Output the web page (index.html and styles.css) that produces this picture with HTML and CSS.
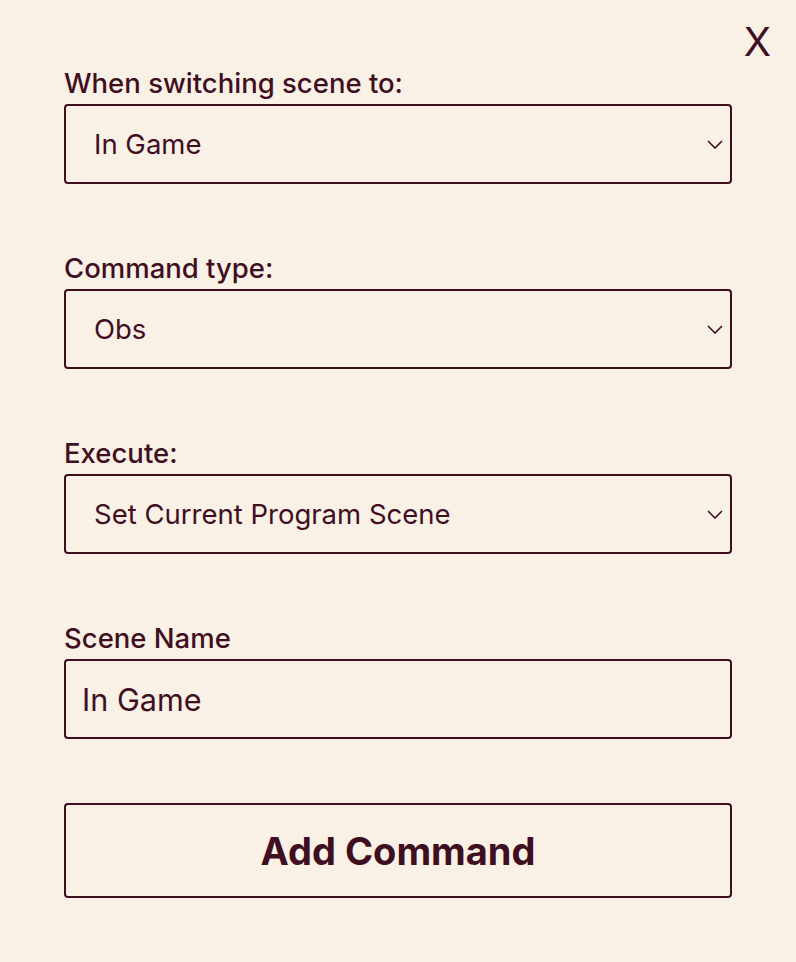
FILE: index.html
```html
<!DOCTYPE html>
<html lang="en">
<head>
<meta charset="utf-8">
<title>Add Command</title>
<link rel="stylesheet" href="styles.css">
</head>
<body>
<div class="modal">
  <button class="close" type="button">X</button>
  <form class="form">
    <div class="field">
      <label class="label" for="scene">When switching scene to:</label>
      <div class="select-wrap">
        <select id="scene" class="select"><option>In Game</option></select>
        <svg class="chevron" viewBox="0 0 16 9" width="16" height="9"><path d="M1 1l7 7 7-7" fill="none" stroke="currentColor" stroke-width="1.6"/></svg>
      </div>
    </div>
    <div class="field">
      <label class="label" for="type">Command type:</label>
      <div class="select-wrap">
        <select id="type" class="select"><option>Obs</option></select>
        <svg class="chevron" viewBox="0 0 16 9" width="16" height="9"><path d="M1 1l7 7 7-7" fill="none" stroke="currentColor" stroke-width="1.6"/></svg>
      </div>
    </div>
    <div class="field">
      <label class="label" for="exec">Execute:</label>
      <div class="select-wrap">
        <select id="exec" class="select"><option>Set Current Program Scene</option></select>
        <svg class="chevron" viewBox="0 0 16 9" width="16" height="9"><path d="M1 1l7 7 7-7" fill="none" stroke="currentColor" stroke-width="1.6"/></svg>
      </div>
    </div>
    <div class="field field-last">
      <label class="label" for="name">Scene Name</label>
      <input id="name" class="input" type="text" value="In Game">
    </div>
    <button class="submit" type="button">Add Command</button>
  </form>
</div>
</body>
</html>
```
FILE: styles.css
```css
html, body {
  margin: 0;
  padding: 0;
  background: #f9f0e6;
}
body {
  font-family: Inter, "Noto Sans", sans-serif;
  color: #3f0f1f;
}
.modal {
  position: relative;
  width: 796px;
  height: 962px;
  box-sizing: border-box;
  padding: 67px 64px 0;
}
.close {
  position: absolute;
  top: 18px;
  right: 25px;
  background: none;
  border: none;
  padding: 0;
  font-family: Inter, sans-serif;
  font-size: 40px;
  font-weight: 400;
  color: #3f0f1f;
  line-height: 48px;
  cursor: pointer;
}
.form {
  display: flex;
  flex-direction: column;
}
.field {
  display: flex;
  flex-direction: column;
  gap: 4px;
  margin-bottom: 68px;
}
.field-last {
  margin-bottom: 64px;
}
.label {
  font-size: 27.5px;
  font-weight: 500;
  line-height: 33px;
}
.select-wrap {
  position: relative;
}
.select {
  appearance: none;
  -webkit-appearance: none;
  width: 100%;
  height: 80px;
  box-sizing: border-box;
  border: 2px solid #3f0f1f;
  border-radius: 4px;
  background: transparent;
  padding: 0 60px 0 28px;
  font-family: Inter, sans-serif;
  font-size: 27.5px;
  color: #3f0f1f;
  outline: none;
}
.chevron {
  position: absolute;
  right: 9px;
  top: 36px;
  color: #3f0f1f;
  pointer-events: none;
}
.input {
  width: 100%;
  height: 80px;
  box-sizing: border-box;
  border: 2px solid #3f0f1f;
  border-radius: 4px;
  background: transparent;
  padding: 0 16px;
  font-family: Inter, sans-serif;
  font-size: 30.6px;
  color: #3f0f1f;
  outline: none;
}
.submit {
  width: 100%;
  height: 95px;
  box-sizing: border-box;
  border: 2px solid #3f0f1f;
  border-radius: 4px;
  background: transparent;
  font-family: Inter, sans-serif;
  font-size: 38px;
  font-weight: 700;
  color: #3f0f1f;
  cursor: pointer;
}
```
